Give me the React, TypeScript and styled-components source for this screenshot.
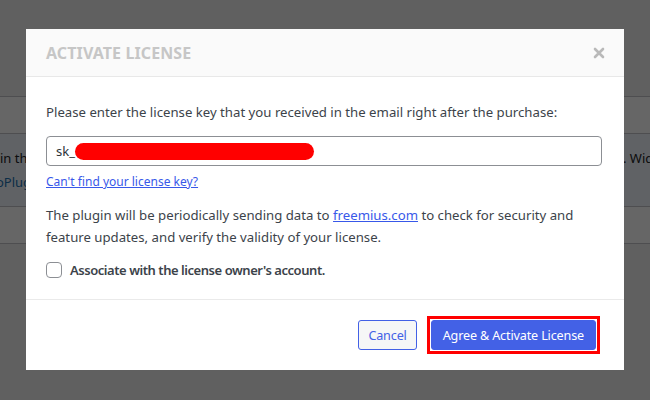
import React from "react";
import styled, { createGlobalStyle } from "styled-components";

const FONT = `"Noto Sans", "Open Sans", sans-serif`;
const BLUE = "#4361e6";

const GlobalStyle = createGlobalStyle`
	html, body {
		margin: 0;
		padding: 0;
		width: 650px;
		height: 400px;
		overflow: hidden;
		background: #f0f0f1;
		font-family: ${FONT};
	}
`;

const Page = styled.div`
	position: relative;
	width: 650px;
	height: 400px;
	overflow: hidden;
	background: #f0f0f1;
`;

const Top = styled.div`
	height: 96px;
	border-bottom: 1px solid #c3c4c7;
`;

const TableRow = styled.div<{ tint: string; h: number }>`
	height: ${(p) => p.h}px;
	background: ${(p) => p.tint};
	border-bottom: 1px solid #c3c4c7;
	display: flex;
	flex-direction: column;
	justify-content: center;
	gap: 6px;
	font-size: 13px;
	color: #1d2327;
	overflow: hidden;
`;

const RowLine = styled.div`
	display: grid;
	grid-template-columns: 623px max-content;
	white-space: nowrap;
`;

const PlugLink = styled.span`
	color: #2271b1;
	margin-left: -4px;
`;

const Overlay = styled.div`
	position: absolute;
	inset: 0;
	background: rgba(0, 0, 0, 0.6);
`;

const Modal = styled.div`
	position: absolute;
	left: 26px;
	top: 29px;
	width: 598px;
	height: 341px;
	background: #fff;
	display: flex;
	flex-direction: column;
`;

const Header = styled.div`
	height: 47px;
	background: #fafafa;
	border-bottom: 1px solid #e8e8e8;
	display: flex;
	align-items: center;
	justify-content: space-between;
	padding: 0 18px 0 20px;
`;

const Title = styled.h4`
	margin: 0;
	font-size: 16px;
	font-weight: 700;
	color: #c6c6c6;
	letter-spacing: 0.1px;
`;

const Close = styled.span`
	width: 14px;
	height: 14px;
	display: flex;
	align-items: center;
	justify-content: center;
`;

const Body = styled.div`
	flex: 1;
	padding: 26px 22px 0 20px;
	font-size: 13.2px;
	color: #3c434a;
	border-bottom: 1px solid #eaeaea;
`;

const Lead = styled.p`
	margin: 0 0 15px;
	line-height: 18px;
`;

const KeyInput = styled.div`
	height: 28px;
	border: 1px solid #8c8f94;
	border-radius: 4px;
	display: flex;
	align-items: center;
	padding: 0 9px;
	color: #2c3338;
	font-size: 13px;
`;

const Redact = styled.span`
	display: inline-block;
	width: 239px;
	height: 17px;
	background: #ff0000;
	border-radius: 9px;
`;

const Link = styled.a`
	color: #3858e9;
	text-decoration: underline;
`;

const SmallLink = styled(Link)`
	display: block;
	margin-top: 8px;
	font-size: 12px;
	line-height: 16px;
`;

const Notice = styled.p`
	margin: 14px 0 0;
	line-height: 22px;
`;

const CheckRow = styled.label`
	display: flex;
	align-items: center;
	gap: 8px;
	margin-top: 13px;
	font-weight: 600;
	font-size: 13px;
	letter-spacing: -0.45px;
	color: #3c434a;
`;

const Box = styled.span`
	width: 14px;
	height: 14px;
	border: 1px solid #8c8f94;
	border-radius: 4px;
	background: #fff;
`;

const Footer = styled.div`
	height: 70px;
	display: flex;
	align-items: center;
	justify-content: flex-end;
	gap: 10px;
	padding: 0 28px 0 0;
	background: #fff;
`;

const Button = styled.button<{ primary?: boolean }>`
	height: 30px;
	padding: 0 ${(p) => (p.primary ? 11 : 9)}px;
	font-family: ${FONT};
	font-size: 12.6px;
	letter-spacing: -0.15px;
	border-radius: 3px;
	border: 1px solid ${BLUE};
	background: ${(p) => (p.primary ? BLUE : "#f6f7f7")};
	color: ${(p) => (p.primary ? "#fff" : BLUE)};
	cursor: pointer;
`;

const Highlight = styled.span`
	display: inline-flex;
	padding: 1px;
	border: 3px solid #ff0000;
	background: #fff;
	margin-right: -4px;
`;

export default function App() {
	return (
		<Page>
			<GlobalStyle />
			<Top />
			<TableRow tint="#ffffff" h={36} />
			<TableRow tint="#f0f6fc" h={72}>
				<RowLine>
					<span>in the</span>
					<span>. Widget</span>
				</RowLine>
				<RowLine>
					<PlugLink>oPlugin</PlugLink>
				</RowLine>
			</TableRow>
			<TableRow tint="#ffffff" h={36} />
			<Overlay />
			<Modal>
				<Header>
					<Title>ACTIVATE LICENSE</Title>
					<Close>
						<svg width="12" height="12" viewBox="0 0 12 12">
							<path d="M2 2 L10 10 M10 2 L2 10" stroke="#b9b9b9" strokeWidth="2.6" strokeLinecap="round" />
						</svg>
					</Close>
				</Header>
				<Body>
					<Lead>Please enter the license key that you received in the email right after the purchase:</Lead>
					<KeyInput>
						sk_<Redact />
					</KeyInput>
					<SmallLink href="#">Can't find your license key?</SmallLink>
					<Notice>
						The plugin will be periodically sending data to <Link href="#">freemius.com</Link> to check for security and
						<br />
						feature updates, and verify the validity of your license.
					</Notice>
					<CheckRow>
						<Box />
						Associate with the license owner's account.
					</CheckRow>
				</Body>
				<Footer>
					<Button>Cancel</Button>
					<Highlight>
						<Button primary>Agree &amp; Activate License</Button>
					</Highlight>
				</Footer>
			</Modal>
		</Page>
	);
}
